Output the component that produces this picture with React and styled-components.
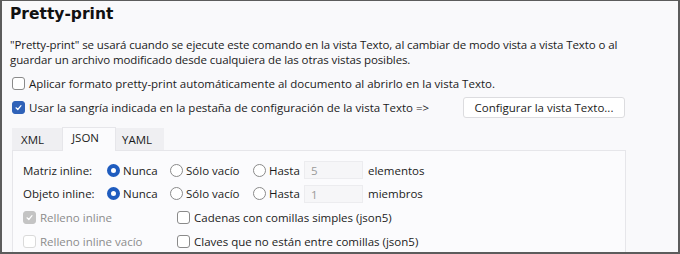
import React from 'react'
import styled, { createGlobalStyle } from 'styled-components'

const GlobalStyle = createGlobalStyle`
  html, body {
    margin: 0;
    padding: 0;
    background: #f9f9fb;
  }
  body {
    font-family: "Open Sans", "Noto Sans", sans-serif;
    font-size: 11.5px;
    color: #1b1b1b;
  }
`

const Frame = styled.div`
  box-sizing: border-box;
  width: 680px;
  height: 254px;
  overflow: hidden;
  background: #f9f9fb;
  border-top: 1px solid #5c5c5c;
  border-left: 2px solid #5c5c5c;
  border-right: 2px solid #5c5c5c;
  border-bottom: 2px solid #5c5c5c;
  padding-left: 8px;
`

const Title = styled.h1`
  margin: 0;
  padding-top: 3px;
  height: 27px;
  font-family: "DejaVu Sans", Verdana, sans-serif;
  font-weight: bold;
  font-size: 15.5px;
  line-height: 20px;
  color: #111;
`

const Para = styled.p`
  margin: 0 0 4px;
  padding-top: 6px;
  width: 640px;
  line-height: 15px;
  letter-spacing: -0.1px;
`

const Check = styled.label`
  display: flex;
  align-items: center;
  gap: 4px;
  height: ${p => p.h || 24}px;
  color: ${p => (p.disabled ? '#8c8c8c' : 'inherit')};
  white-space: nowrap;
`

const Box = styled.span`
  box-sizing: border-box;
  width: 13px;
  height: 13px;
  border-radius: 3px;
  flex: none;
  display: flex;
  align-items: center;
  justify-content: center;
  border: 1px solid ${p => (p.checked ? (p.disabled ? '#c4c4c4' : '#2f62b8') : p.disabled ? '#dadada' : '#8a8a8a')};
  background: ${p => (p.checked ? (p.disabled ? '#c4c4c4' : '#2f62b8') : '#fff')};
`

const CheckMark = () => (
  <svg width="9" height="9" viewBox="0 0 9 9">
    <path d="M2 4.8 L3.8 6.5 L7 2.6" fill="none" stroke="#fff" strokeWidth="1.2" strokeLinecap="round" strokeLinejoin="round" />
  </svg>
)

const Checkbox = ({ checked, disabled, children, h }) => (
  <Check disabled={disabled} h={h}>
    <Box checked={checked} disabled={disabled}>{checked && <CheckMark />}</Box>
    {children}
  </Check>
)

const CheckLine = styled.div`
  display: flex;
  align-items: center;
  padding-left: 2px;
`

const ConfigButton = styled.button`
  box-sizing: border-box;
  margin-left: auto;
  margin-right: 53px;
  width: 162px;
  height: 21px;
  border: 1px solid #dcdcdf;
  border-radius: 3px;
  background: #fff;
  font-family: inherit;
  font-size: 11.5px;
  color: #1b1b1b;
  padding: 0;
`

const Tabs = styled.div`
  display: flex;
  align-items: flex-end;
  margin-top: 7px;
  padding-left: 2px;
  height: 24px;
`

const Tab = styled.div`
  box-sizing: border-box;
  width: ${p => p.w}px;
  height: ${p => (p.active ? 24 : 22)}px;
  padding-left: ${p => p.pl}px;
  line-height: ${p => (p.active ? 20 : 22)}px;
  background: ${p => (p.active ? '#fbfbfd' : '#efeff2')};
  border: 1px solid ${p => (p.active ? '#e6e6ea' : '#efeff2')};
  border-bottom: none;
  margin-bottom: ${p => (p.active ? -1 : 0)}px;
  position: relative;
  z-index: ${p => (p.active ? 1 : 0)};
`

const Panel = styled.div`
  box-sizing: border-box;
  margin-left: 2px;
  width: 614px;
  height: 120px;
  background: #fbfbfd;
  border: 1px solid #e6e6ea;
  padding: 7px 0 0 10px;
`

const Row = styled.div`
  display: flex;
  align-items: center;
  height: ${p => p.h || 24}px;
`

const Cell = styled.div`
  width: ${p => p.w}px;
  flex: none;
  display: flex;
  align-items: center;
`

const RadioWrap = styled.label`
  display: flex;
  align-items: center;
  gap: 3px;
  width: ${p => p.w}px;
  flex: none;
`

const Dot = styled.span`
  box-sizing: border-box;
  width: 13px;
  height: 13px;
  border-radius: 50%;
  flex: none;
  background: #fff;
  border: ${p => (p.checked ? '4px solid #1f5cbf' : '1px solid #8a8a8a')};
`

const Radio = ({ checked, w, children }) => (
  <RadioWrap w={w}>
    <Dot checked={checked} />
    {children}
  </RadioWrap>
)

const NumInput = styled.div`
  box-sizing: border-box;
  width: 59px;
  height: 18px;
  margin-left: 6px;
  padding-left: 6px;
  line-height: 17px;
  background: #f6f6f8;
  border: 1px solid #ececef;
  color: #9a9a9a;
`

const Unit = styled.span`
  margin-left: 5px;
`

const InlineRow = ({ label, value, unit, h }) => (
  <Row h={h}>
    <Cell w={84}>{label}</Cell>
    <Radio checked w={63}>Nunca</Radio>
    <Radio w={83}>Sólo vacío</Radio>
    <Radio w={45}>Hasta</Radio>
    <NumInput>{value}</NumInput>
    <Unit>{unit}</Unit>
  </Row>
)

export default function App() {
  return (
    <>
      <GlobalStyle />
      <Frame>
        <Title>Pretty-print</Title>
        <Para>
          "Pretty-print" se usará cuando se ejecute este comando en la vista Texto, al cambiar de modo vista a vista Texto o al
          guardar un archivo modificado desde cualquiera de las otras vistas posibles.
        </Para>
        <CheckLine>
          <Checkbox>Aplicar formato pretty-print automáticamente al documento al abrirlo en la vista Texto.</Checkbox>
        </CheckLine>
        <CheckLine>
          <Checkbox checked>Usar la sangría indicada en la pestaña de configuración de la vista Texto =&gt;</Checkbox>
          <ConfigButton>Configurar la vista Texto...</ConfigButton>
        </CheckLine>
        <Tabs>
          <Tab w={50} pl={8}>XML</Tab>
          <Tab w={54} pl={9} active>JSON</Tab>
          <Tab w={48} pl={5}>YAML</Tab>
        </Tabs>
        <Panel>
          <InlineRow label="Matriz inline:" value="5" unit="elementos" />
          <InlineRow label="Objeto inline:" value="1" unit="miembros" h={23} />
          <Row>
            <Cell w={154}><Checkbox checked disabled>Relleno inline</Checkbox></Cell>
            <Checkbox>Cadenas con comillas simples (json5)</Checkbox>
          </Row>
          <Row>
            <Cell w={154}><Checkbox disabled>Relleno inline vacío</Checkbox></Cell>
            <Checkbox>Claves que no están entre comillas (json5)</Checkbox>
          </Row>
        </Panel>
      </Frame>
    </>
  )
}
